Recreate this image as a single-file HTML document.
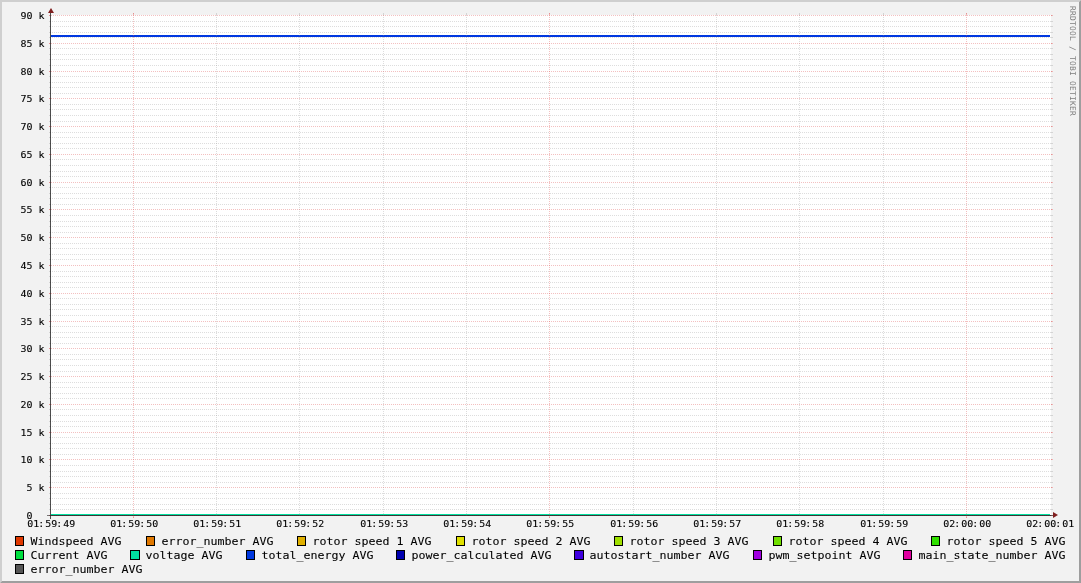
<!DOCTYPE html>
<html lang="en"><head><meta charset="utf-8"><title>RRDTOOL graph</title>
<style>
html,body{margin:0;padding:0;background:#f2f2f2;overflow:hidden}
svg{display:block;position:absolute;left:0;top:0;will-change:transform}
text{font-family:"DejaVu Sans Mono","Liberation Mono",monospace;fill:#000;white-space:pre}
.ax{font-size:9.5px;stroke:#000;stroke-width:0.1px}
.lg{font-size:11.11px;stroke:#000;stroke-width:0.08px}
.wm{font-size:7.9px;letter-spacing:0.244px;fill:#000;fill-opacity:0.5}
.g line{shape-rendering:crispEdges;stroke-width:1}
.mn{stroke:rgba(143,143,143,0.30)}.mj{stroke:rgba(222,79,79,0.36)}
.d{stroke-dasharray:1 1}
</style></head><body>
<svg width="1081" height="583" viewBox="0 0 1081 583">
<rect x="0" y="0" width="1081" height="583" fill="#f2f2f2"/>
<polygon points="0,583 2,581 2,2 1079,2 1081,0 0,0" fill="#cfcfcf"/>
<polygon points="2,581 1079,581 1079,2 1081,0 1081,583 0,583" fill="#9e9e9e"/>
<rect x="51" y="15" width="1000" height="500" fill="#fff" shape-rendering="crispEdges"/>
<g shape-rendering="crispEdges">
<rect x="51" y="35" width="999" height="2" fill="#0038e0"/>
<rect x="51" y="515" width="1000" height="1" fill="#555555"/>
<rect x="51" y="514" width="999" height="1" fill="#00e0a0"/>
</g>
<g class="g">
<line class="mn" x1="49" y1="509.5" x2="51" y2="509.5"/>
<line class="mn" x1="1051" y1="509.5" x2="1053" y2="509.5"/>
<line class="mn d" x1="50" y1="509.5" x2="1052" y2="509.5"/>
<line class="mn" x1="49" y1="504.5" x2="51" y2="504.5"/>
<line class="mn" x1="1051" y1="504.5" x2="1053" y2="504.5"/>
<line class="mn d" x1="50" y1="504.5" x2="1052" y2="504.5"/>
<line class="mn" x1="49" y1="498.5" x2="51" y2="498.5"/>
<line class="mn" x1="1051" y1="498.5" x2="1053" y2="498.5"/>
<line class="mn d" x1="50" y1="498.5" x2="1052" y2="498.5"/>
<line class="mn" x1="49" y1="493.5" x2="51" y2="493.5"/>
<line class="mn" x1="1051" y1="493.5" x2="1053" y2="493.5"/>
<line class="mn d" x1="50" y1="493.5" x2="1052" y2="493.5"/>
<line class="mn" x1="49" y1="482.5" x2="51" y2="482.5"/>
<line class="mn" x1="1051" y1="482.5" x2="1053" y2="482.5"/>
<line class="mn d" x1="50" y1="482.5" x2="1052" y2="482.5"/>
<line class="mn" x1="49" y1="476.5" x2="51" y2="476.5"/>
<line class="mn" x1="1051" y1="476.5" x2="1053" y2="476.5"/>
<line class="mn d" x1="50" y1="476.5" x2="1052" y2="476.5"/>
<line class="mn" x1="49" y1="471.5" x2="51" y2="471.5"/>
<line class="mn" x1="1051" y1="471.5" x2="1053" y2="471.5"/>
<line class="mn d" x1="50" y1="471.5" x2="1052" y2="471.5"/>
<line class="mn" x1="49" y1="465.5" x2="51" y2="465.5"/>
<line class="mn" x1="1051" y1="465.5" x2="1053" y2="465.5"/>
<line class="mn d" x1="50" y1="465.5" x2="1052" y2="465.5"/>
<line class="mn" x1="49" y1="454.5" x2="51" y2="454.5"/>
<line class="mn" x1="1051" y1="454.5" x2="1053" y2="454.5"/>
<line class="mn d" x1="50" y1="454.5" x2="1052" y2="454.5"/>
<line class="mn" x1="49" y1="448.5" x2="51" y2="448.5"/>
<line class="mn" x1="1051" y1="448.5" x2="1053" y2="448.5"/>
<line class="mn d" x1="50" y1="448.5" x2="1052" y2="448.5"/>
<line class="mn" x1="49" y1="443.5" x2="51" y2="443.5"/>
<line class="mn" x1="1051" y1="443.5" x2="1053" y2="443.5"/>
<line class="mn d" x1="50" y1="443.5" x2="1052" y2="443.5"/>
<line class="mn" x1="49" y1="437.5" x2="51" y2="437.5"/>
<line class="mn" x1="1051" y1="437.5" x2="1053" y2="437.5"/>
<line class="mn d" x1="50" y1="437.5" x2="1052" y2="437.5"/>
<line class="mn" x1="49" y1="426.5" x2="51" y2="426.5"/>
<line class="mn" x1="1051" y1="426.5" x2="1053" y2="426.5"/>
<line class="mn d" x1="50" y1="426.5" x2="1052" y2="426.5"/>
<line class="mn" x1="49" y1="421.5" x2="51" y2="421.5"/>
<line class="mn" x1="1051" y1="421.5" x2="1053" y2="421.5"/>
<line class="mn d" x1="50" y1="421.5" x2="1052" y2="421.5"/>
<line class="mn" x1="49" y1="415.5" x2="51" y2="415.5"/>
<line class="mn" x1="1051" y1="415.5" x2="1053" y2="415.5"/>
<line class="mn d" x1="50" y1="415.5" x2="1052" y2="415.5"/>
<line class="mn" x1="49" y1="409.5" x2="51" y2="409.5"/>
<line class="mn" x1="1051" y1="409.5" x2="1053" y2="409.5"/>
<line class="mn d" x1="50" y1="409.5" x2="1052" y2="409.5"/>
<line class="mn" x1="49" y1="398.5" x2="51" y2="398.5"/>
<line class="mn" x1="1051" y1="398.5" x2="1053" y2="398.5"/>
<line class="mn d" x1="50" y1="398.5" x2="1052" y2="398.5"/>
<line class="mn" x1="49" y1="393.5" x2="51" y2="393.5"/>
<line class="mn" x1="1051" y1="393.5" x2="1053" y2="393.5"/>
<line class="mn d" x1="50" y1="393.5" x2="1052" y2="393.5"/>
<line class="mn" x1="49" y1="387.5" x2="51" y2="387.5"/>
<line class="mn" x1="1051" y1="387.5" x2="1053" y2="387.5"/>
<line class="mn d" x1="50" y1="387.5" x2="1052" y2="387.5"/>
<line class="mn" x1="49" y1="382.5" x2="51" y2="382.5"/>
<line class="mn" x1="1051" y1="382.5" x2="1053" y2="382.5"/>
<line class="mn d" x1="50" y1="382.5" x2="1052" y2="382.5"/>
<line class="mn" x1="49" y1="371.5" x2="51" y2="371.5"/>
<line class="mn" x1="1051" y1="371.5" x2="1053" y2="371.5"/>
<line class="mn d" x1="50" y1="371.5" x2="1052" y2="371.5"/>
<line class="mn" x1="49" y1="365.5" x2="51" y2="365.5"/>
<line class="mn" x1="1051" y1="365.5" x2="1053" y2="365.5"/>
<line class="mn d" x1="50" y1="365.5" x2="1052" y2="365.5"/>
<line class="mn" x1="49" y1="359.5" x2="51" y2="359.5"/>
<line class="mn" x1="1051" y1="359.5" x2="1053" y2="359.5"/>
<line class="mn d" x1="50" y1="359.5" x2="1052" y2="359.5"/>
<line class="mn" x1="49" y1="354.5" x2="51" y2="354.5"/>
<line class="mn" x1="1051" y1="354.5" x2="1053" y2="354.5"/>
<line class="mn d" x1="50" y1="354.5" x2="1052" y2="354.5"/>
<line class="mn" x1="49" y1="343.5" x2="51" y2="343.5"/>
<line class="mn" x1="1051" y1="343.5" x2="1053" y2="343.5"/>
<line class="mn d" x1="50" y1="343.5" x2="1052" y2="343.5"/>
<line class="mn" x1="49" y1="337.5" x2="51" y2="337.5"/>
<line class="mn" x1="1051" y1="337.5" x2="1053" y2="337.5"/>
<line class="mn d" x1="50" y1="337.5" x2="1052" y2="337.5"/>
<line class="mn" x1="49" y1="332.5" x2="51" y2="332.5"/>
<line class="mn" x1="1051" y1="332.5" x2="1053" y2="332.5"/>
<line class="mn d" x1="50" y1="332.5" x2="1052" y2="332.5"/>
<line class="mn" x1="49" y1="326.5" x2="51" y2="326.5"/>
<line class="mn" x1="1051" y1="326.5" x2="1053" y2="326.5"/>
<line class="mn d" x1="50" y1="326.5" x2="1052" y2="326.5"/>
<line class="mn" x1="49" y1="315.5" x2="51" y2="315.5"/>
<line class="mn" x1="1051" y1="315.5" x2="1053" y2="315.5"/>
<line class="mn d" x1="50" y1="315.5" x2="1052" y2="315.5"/>
<line class="mn" x1="49" y1="309.5" x2="51" y2="309.5"/>
<line class="mn" x1="1051" y1="309.5" x2="1053" y2="309.5"/>
<line class="mn d" x1="50" y1="309.5" x2="1052" y2="309.5"/>
<line class="mn" x1="49" y1="304.5" x2="51" y2="304.5"/>
<line class="mn" x1="1051" y1="304.5" x2="1053" y2="304.5"/>
<line class="mn d" x1="50" y1="304.5" x2="1052" y2="304.5"/>
<line class="mn" x1="49" y1="298.5" x2="51" y2="298.5"/>
<line class="mn" x1="1051" y1="298.5" x2="1053" y2="298.5"/>
<line class="mn d" x1="50" y1="298.5" x2="1052" y2="298.5"/>
<line class="mn" x1="49" y1="287.5" x2="51" y2="287.5"/>
<line class="mn" x1="1051" y1="287.5" x2="1053" y2="287.5"/>
<line class="mn d" x1="50" y1="287.5" x2="1052" y2="287.5"/>
<line class="mn" x1="49" y1="282.5" x2="51" y2="282.5"/>
<line class="mn" x1="1051" y1="282.5" x2="1053" y2="282.5"/>
<line class="mn d" x1="50" y1="282.5" x2="1052" y2="282.5"/>
<line class="mn" x1="49" y1="276.5" x2="51" y2="276.5"/>
<line class="mn" x1="1051" y1="276.5" x2="1053" y2="276.5"/>
<line class="mn d" x1="50" y1="276.5" x2="1052" y2="276.5"/>
<line class="mn" x1="49" y1="271.5" x2="51" y2="271.5"/>
<line class="mn" x1="1051" y1="271.5" x2="1053" y2="271.5"/>
<line class="mn d" x1="50" y1="271.5" x2="1052" y2="271.5"/>
<line class="mn" x1="49" y1="259.5" x2="51" y2="259.5"/>
<line class="mn" x1="1051" y1="259.5" x2="1053" y2="259.5"/>
<line class="mn d" x1="50" y1="259.5" x2="1052" y2="259.5"/>
<line class="mn" x1="49" y1="254.5" x2="51" y2="254.5"/>
<line class="mn" x1="1051" y1="254.5" x2="1053" y2="254.5"/>
<line class="mn d" x1="50" y1="254.5" x2="1052" y2="254.5"/>
<line class="mn" x1="49" y1="248.5" x2="51" y2="248.5"/>
<line class="mn" x1="1051" y1="248.5" x2="1053" y2="248.5"/>
<line class="mn d" x1="50" y1="248.5" x2="1052" y2="248.5"/>
<line class="mn" x1="49" y1="243.5" x2="51" y2="243.5"/>
<line class="mn" x1="1051" y1="243.5" x2="1053" y2="243.5"/>
<line class="mn d" x1="50" y1="243.5" x2="1052" y2="243.5"/>
<line class="mn" x1="49" y1="232.5" x2="51" y2="232.5"/>
<line class="mn" x1="1051" y1="232.5" x2="1053" y2="232.5"/>
<line class="mn d" x1="50" y1="232.5" x2="1052" y2="232.5"/>
<line class="mn" x1="49" y1="226.5" x2="51" y2="226.5"/>
<line class="mn" x1="1051" y1="226.5" x2="1053" y2="226.5"/>
<line class="mn d" x1="50" y1="226.5" x2="1052" y2="226.5"/>
<line class="mn" x1="49" y1="221.5" x2="51" y2="221.5"/>
<line class="mn" x1="1051" y1="221.5" x2="1053" y2="221.5"/>
<line class="mn d" x1="50" y1="221.5" x2="1052" y2="221.5"/>
<line class="mn" x1="49" y1="215.5" x2="51" y2="215.5"/>
<line class="mn" x1="1051" y1="215.5" x2="1053" y2="215.5"/>
<line class="mn d" x1="50" y1="215.5" x2="1052" y2="215.5"/>
<line class="mn" x1="49" y1="204.5" x2="51" y2="204.5"/>
<line class="mn" x1="1051" y1="204.5" x2="1053" y2="204.5"/>
<line class="mn d" x1="50" y1="204.5" x2="1052" y2="204.5"/>
<line class="mn" x1="49" y1="198.5" x2="51" y2="198.5"/>
<line class="mn" x1="1051" y1="198.5" x2="1053" y2="198.5"/>
<line class="mn d" x1="50" y1="198.5" x2="1052" y2="198.5"/>
<line class="mn" x1="49" y1="193.5" x2="51" y2="193.5"/>
<line class="mn" x1="1051" y1="193.5" x2="1053" y2="193.5"/>
<line class="mn d" x1="50" y1="193.5" x2="1052" y2="193.5"/>
<line class="mn" x1="49" y1="187.5" x2="51" y2="187.5"/>
<line class="mn" x1="1051" y1="187.5" x2="1053" y2="187.5"/>
<line class="mn d" x1="50" y1="187.5" x2="1052" y2="187.5"/>
<line class="mn" x1="49" y1="176.5" x2="51" y2="176.5"/>
<line class="mn" x1="1051" y1="176.5" x2="1053" y2="176.5"/>
<line class="mn d" x1="50" y1="176.5" x2="1052" y2="176.5"/>
<line class="mn" x1="49" y1="171.5" x2="51" y2="171.5"/>
<line class="mn" x1="1051" y1="171.5" x2="1053" y2="171.5"/>
<line class="mn d" x1="50" y1="171.5" x2="1052" y2="171.5"/>
<line class="mn" x1="49" y1="165.5" x2="51" y2="165.5"/>
<line class="mn" x1="1051" y1="165.5" x2="1053" y2="165.5"/>
<line class="mn d" x1="50" y1="165.5" x2="1052" y2="165.5"/>
<line class="mn" x1="49" y1="159.5" x2="51" y2="159.5"/>
<line class="mn" x1="1051" y1="159.5" x2="1053" y2="159.5"/>
<line class="mn d" x1="50" y1="159.5" x2="1052" y2="159.5"/>
<line class="mn" x1="49" y1="148.5" x2="51" y2="148.5"/>
<line class="mn" x1="1051" y1="148.5" x2="1053" y2="148.5"/>
<line class="mn d" x1="50" y1="148.5" x2="1052" y2="148.5"/>
<line class="mn" x1="49" y1="143.5" x2="51" y2="143.5"/>
<line class="mn" x1="1051" y1="143.5" x2="1053" y2="143.5"/>
<line class="mn d" x1="50" y1="143.5" x2="1052" y2="143.5"/>
<line class="mn" x1="49" y1="137.5" x2="51" y2="137.5"/>
<line class="mn" x1="1051" y1="137.5" x2="1053" y2="137.5"/>
<line class="mn d" x1="50" y1="137.5" x2="1052" y2="137.5"/>
<line class="mn" x1="49" y1="132.5" x2="51" y2="132.5"/>
<line class="mn" x1="1051" y1="132.5" x2="1053" y2="132.5"/>
<line class="mn d" x1="50" y1="132.5" x2="1052" y2="132.5"/>
<line class="mn" x1="49" y1="121.5" x2="51" y2="121.5"/>
<line class="mn" x1="1051" y1="121.5" x2="1053" y2="121.5"/>
<line class="mn d" x1="50" y1="121.5" x2="1052" y2="121.5"/>
<line class="mn" x1="49" y1="115.5" x2="51" y2="115.5"/>
<line class="mn" x1="1051" y1="115.5" x2="1053" y2="115.5"/>
<line class="mn d" x1="50" y1="115.5" x2="1052" y2="115.5"/>
<line class="mn" x1="49" y1="109.5" x2="51" y2="109.5"/>
<line class="mn" x1="1051" y1="109.5" x2="1053" y2="109.5"/>
<line class="mn d" x1="50" y1="109.5" x2="1052" y2="109.5"/>
<line class="mn" x1="49" y1="104.5" x2="51" y2="104.5"/>
<line class="mn" x1="1051" y1="104.5" x2="1053" y2="104.5"/>
<line class="mn d" x1="50" y1="104.5" x2="1052" y2="104.5"/>
<line class="mn" x1="49" y1="93.5" x2="51" y2="93.5"/>
<line class="mn" x1="1051" y1="93.5" x2="1053" y2="93.5"/>
<line class="mn d" x1="50" y1="93.5" x2="1052" y2="93.5"/>
<line class="mn" x1="49" y1="87.5" x2="51" y2="87.5"/>
<line class="mn" x1="1051" y1="87.5" x2="1053" y2="87.5"/>
<line class="mn d" x1="50" y1="87.5" x2="1052" y2="87.5"/>
<line class="mn" x1="49" y1="82.5" x2="51" y2="82.5"/>
<line class="mn" x1="1051" y1="82.5" x2="1053" y2="82.5"/>
<line class="mn d" x1="50" y1="82.5" x2="1052" y2="82.5"/>
<line class="mn" x1="49" y1="76.5" x2="51" y2="76.5"/>
<line class="mn" x1="1051" y1="76.5" x2="1053" y2="76.5"/>
<line class="mn d" x1="50" y1="76.5" x2="1052" y2="76.5"/>
<line class="mn" x1="49" y1="65.5" x2="51" y2="65.5"/>
<line class="mn" x1="1051" y1="65.5" x2="1053" y2="65.5"/>
<line class="mn d" x1="50" y1="65.5" x2="1052" y2="65.5"/>
<line class="mn" x1="49" y1="59.5" x2="51" y2="59.5"/>
<line class="mn" x1="1051" y1="59.5" x2="1053" y2="59.5"/>
<line class="mn d" x1="50" y1="59.5" x2="1052" y2="59.5"/>
<line class="mn" x1="49" y1="54.5" x2="51" y2="54.5"/>
<line class="mn" x1="1051" y1="54.5" x2="1053" y2="54.5"/>
<line class="mn d" x1="50" y1="54.5" x2="1052" y2="54.5"/>
<line class="mn" x1="49" y1="48.5" x2="51" y2="48.5"/>
<line class="mn" x1="1051" y1="48.5" x2="1053" y2="48.5"/>
<line class="mn d" x1="50" y1="48.5" x2="1052" y2="48.5"/>
<line class="mn" x1="49" y1="37.5" x2="51" y2="37.5"/>
<line class="mn" x1="1051" y1="37.5" x2="1053" y2="37.5"/>
<line class="mn d" x1="50" y1="37.5" x2="1052" y2="37.5"/>
<line class="mn" x1="49" y1="32.5" x2="51" y2="32.5"/>
<line class="mn" x1="1051" y1="32.5" x2="1053" y2="32.5"/>
<line class="mn d" x1="50" y1="32.5" x2="1052" y2="32.5"/>
<line class="mn" x1="49" y1="26.5" x2="51" y2="26.5"/>
<line class="mn" x1="1051" y1="26.5" x2="1053" y2="26.5"/>
<line class="mn d" x1="50" y1="26.5" x2="1052" y2="26.5"/>
<line class="mn" x1="49" y1="21.5" x2="51" y2="21.5"/>
<line class="mn" x1="1051" y1="21.5" x2="1053" y2="21.5"/>
<line class="mn d" x1="50" y1="21.5" x2="1052" y2="21.5"/>
<line class="mn" x1="216.5" y1="13" x2="216.5" y2="15"/>
<line class="mn" x1="216.5" y1="515" x2="216.5" y2="516"/>
<line class="mn d" x1="216.5" y1="516" x2="216.5" y2="14"/>
<line class="mn" x1="299.5" y1="13" x2="299.5" y2="15"/>
<line class="mn" x1="299.5" y1="515" x2="299.5" y2="516"/>
<line class="mn d" x1="299.5" y1="516" x2="299.5" y2="14"/>
<line class="mn" x1="383.5" y1="13" x2="383.5" y2="15"/>
<line class="mn" x1="383.5" y1="515" x2="383.5" y2="516"/>
<line class="mn d" x1="383.5" y1="516" x2="383.5" y2="14"/>
<line class="mn" x1="466.5" y1="13" x2="466.5" y2="15"/>
<line class="mn" x1="466.5" y1="515" x2="466.5" y2="516"/>
<line class="mn d" x1="466.5" y1="516" x2="466.5" y2="14"/>
<line class="mn" x1="633.5" y1="13" x2="633.5" y2="15"/>
<line class="mn" x1="633.5" y1="515" x2="633.5" y2="516"/>
<line class="mn d" x1="633.5" y1="516" x2="633.5" y2="14"/>
<line class="mn" x1="716.5" y1="13" x2="716.5" y2="15"/>
<line class="mn" x1="716.5" y1="515" x2="716.5" y2="516"/>
<line class="mn d" x1="716.5" y1="516" x2="716.5" y2="14"/>
<line class="mn" x1="799.5" y1="13" x2="799.5" y2="15"/>
<line class="mn" x1="799.5" y1="515" x2="799.5" y2="516"/>
<line class="mn d" x1="799.5" y1="516" x2="799.5" y2="14"/>
<line class="mn" x1="883.5" y1="13" x2="883.5" y2="15"/>
<line class="mn" x1="883.5" y1="515" x2="883.5" y2="516"/>
<line class="mn d" x1="883.5" y1="516" x2="883.5" y2="14"/>
<line class="mj" x1="49" y1="515.5" x2="51" y2="515.5"/>
<line class="mj" x1="1051" y1="515.5" x2="1053" y2="515.5"/>
<line class="mj d" x1="49" y1="515.5" x2="1053" y2="515.5"/>
<line class="mj" x1="49" y1="487.5" x2="51" y2="487.5"/>
<line class="mj" x1="1051" y1="487.5" x2="1053" y2="487.5"/>
<line class="mj d" x1="49" y1="487.5" x2="1053" y2="487.5"/>
<line class="mj" x1="49" y1="459.5" x2="51" y2="459.5"/>
<line class="mj" x1="1051" y1="459.5" x2="1053" y2="459.5"/>
<line class="mj d" x1="49" y1="459.5" x2="1053" y2="459.5"/>
<line class="mj" x1="49" y1="432.5" x2="51" y2="432.5"/>
<line class="mj" x1="1051" y1="432.5" x2="1053" y2="432.5"/>
<line class="mj d" x1="49" y1="432.5" x2="1053" y2="432.5"/>
<line class="mj" x1="49" y1="404.5" x2="51" y2="404.5"/>
<line class="mj" x1="1051" y1="404.5" x2="1053" y2="404.5"/>
<line class="mj d" x1="49" y1="404.5" x2="1053" y2="404.5"/>
<line class="mj" x1="49" y1="376.5" x2="51" y2="376.5"/>
<line class="mj" x1="1051" y1="376.5" x2="1053" y2="376.5"/>
<line class="mj d" x1="49" y1="376.5" x2="1053" y2="376.5"/>
<line class="mj" x1="49" y1="348.5" x2="51" y2="348.5"/>
<line class="mj" x1="1051" y1="348.5" x2="1053" y2="348.5"/>
<line class="mj d" x1="49" y1="348.5" x2="1053" y2="348.5"/>
<line class="mj" x1="49" y1="321.5" x2="51" y2="321.5"/>
<line class="mj" x1="1051" y1="321.5" x2="1053" y2="321.5"/>
<line class="mj d" x1="49" y1="321.5" x2="1053" y2="321.5"/>
<line class="mj" x1="49" y1="293.5" x2="51" y2="293.5"/>
<line class="mj" x1="1051" y1="293.5" x2="1053" y2="293.5"/>
<line class="mj d" x1="49" y1="293.5" x2="1053" y2="293.5"/>
<line class="mj" x1="49" y1="265.5" x2="51" y2="265.5"/>
<line class="mj" x1="1051" y1="265.5" x2="1053" y2="265.5"/>
<line class="mj d" x1="49" y1="265.5" x2="1053" y2="265.5"/>
<line class="mj" x1="49" y1="237.5" x2="51" y2="237.5"/>
<line class="mj" x1="1051" y1="237.5" x2="1053" y2="237.5"/>
<line class="mj d" x1="49" y1="237.5" x2="1053" y2="237.5"/>
<line class="mj" x1="49" y1="209.5" x2="51" y2="209.5"/>
<line class="mj" x1="1051" y1="209.5" x2="1053" y2="209.5"/>
<line class="mj d" x1="49" y1="209.5" x2="1053" y2="209.5"/>
<line class="mj" x1="49" y1="182.5" x2="51" y2="182.5"/>
<line class="mj" x1="1051" y1="182.5" x2="1053" y2="182.5"/>
<line class="mj d" x1="49" y1="182.5" x2="1053" y2="182.5"/>
<line class="mj" x1="49" y1="154.5" x2="51" y2="154.5"/>
<line class="mj" x1="1051" y1="154.5" x2="1053" y2="154.5"/>
<line class="mj d" x1="49" y1="154.5" x2="1053" y2="154.5"/>
<line class="mj" x1="49" y1="126.5" x2="51" y2="126.5"/>
<line class="mj" x1="1051" y1="126.5" x2="1053" y2="126.5"/>
<line class="mj d" x1="49" y1="126.5" x2="1053" y2="126.5"/>
<line class="mj" x1="49" y1="98.5" x2="51" y2="98.5"/>
<line class="mj" x1="1051" y1="98.5" x2="1053" y2="98.5"/>
<line class="mj d" x1="49" y1="98.5" x2="1053" y2="98.5"/>
<line class="mj" x1="49" y1="71.5" x2="51" y2="71.5"/>
<line class="mj" x1="1051" y1="71.5" x2="1053" y2="71.5"/>
<line class="mj d" x1="49" y1="71.5" x2="1053" y2="71.5"/>
<line class="mj" x1="49" y1="43.5" x2="51" y2="43.5"/>
<line class="mj" x1="1051" y1="43.5" x2="1053" y2="43.5"/>
<line class="mj d" x1="49" y1="43.5" x2="1053" y2="43.5"/>
<line class="mj" x1="49" y1="15.5" x2="51" y2="15.5"/>
<line class="mj" x1="1051" y1="15.5" x2="1053" y2="15.5"/>
<line class="mj d" x1="49" y1="15.5" x2="1053" y2="15.5"/>
<line class="mj" x1="133.5" y1="13" x2="133.5" y2="15"/>
<line class="mj" x1="133.5" y1="515" x2="133.5" y2="518"/>
<line class="mj d" x1="133.5" y1="518" x2="133.5" y2="13"/>
<line class="mj" x1="549.5" y1="13" x2="549.5" y2="15"/>
<line class="mj" x1="549.5" y1="515" x2="549.5" y2="518"/>
<line class="mj d" x1="549.5" y1="518" x2="549.5" y2="13"/>
<line class="mj" x1="966.5" y1="13" x2="966.5" y2="15"/>
<line class="mj" x1="966.5" y1="515" x2="966.5" y2="518"/>
<line class="mj d" x1="966.5" y1="518" x2="966.5" y2="13"/>
</g>
<g shape-rendering="crispEdges">
<rect x="47" y="515" width="1008" height="1" fill="#1f1f1f" fill-opacity="0.6"/>
<rect x="50" y="11" width="1" height="508" fill="#1f1f1f" fill-opacity="0.78"/>
</g>
<polygon points="1053,512 1053,518 1058,515" fill="#801f1f"/>
<polygon points="48,13 54,13 51,8" fill="#801f1f"/>
<text class="ax" x="26.5" y="519" textLength="6" lengthAdjust="spacingAndGlyphs">0</text>
<text class="ax" x="26.5" y="491" textLength="18" lengthAdjust="spacingAndGlyphs">5 k</text>
<text class="ax" x="20.5" y="463" textLength="24" lengthAdjust="spacingAndGlyphs">10 k</text>
<text class="ax" x="20.5" y="436" textLength="24" lengthAdjust="spacingAndGlyphs">15 k</text>
<text class="ax" x="20.5" y="408" textLength="24" lengthAdjust="spacingAndGlyphs">20 k</text>
<text class="ax" x="20.5" y="380" textLength="24" lengthAdjust="spacingAndGlyphs">25 k</text>
<text class="ax" x="20.5" y="352" textLength="24" lengthAdjust="spacingAndGlyphs">30 k</text>
<text class="ax" x="20.5" y="325" textLength="24" lengthAdjust="spacingAndGlyphs">35 k</text>
<text class="ax" x="20.5" y="297" textLength="24" lengthAdjust="spacingAndGlyphs">40 k</text>
<text class="ax" x="20.5" y="269" textLength="24" lengthAdjust="spacingAndGlyphs">45 k</text>
<text class="ax" x="20.5" y="241" textLength="24" lengthAdjust="spacingAndGlyphs">50 k</text>
<text class="ax" x="20.5" y="213" textLength="24" lengthAdjust="spacingAndGlyphs">55 k</text>
<text class="ax" x="20.5" y="186" textLength="24" lengthAdjust="spacingAndGlyphs">60 k</text>
<text class="ax" x="20.5" y="158" textLength="24" lengthAdjust="spacingAndGlyphs">65 k</text>
<text class="ax" x="20.5" y="130" textLength="24" lengthAdjust="spacingAndGlyphs">70 k</text>
<text class="ax" x="20.5" y="102" textLength="24" lengthAdjust="spacingAndGlyphs">75 k</text>
<text class="ax" x="20.5" y="75" textLength="24" lengthAdjust="spacingAndGlyphs">80 k</text>
<text class="ax" x="20.5" y="47" textLength="24" lengthAdjust="spacingAndGlyphs">85 k</text>
<text class="ax" x="20.5" y="19" textLength="24" lengthAdjust="spacingAndGlyphs">90 k</text>
<text class="ax" x="27.3" y="527" dx="0 0 -1 1 0 -1 1 0" textLength="48" lengthAdjust="spacingAndGlyphs">01:59:49</text>
<text class="ax" x="110.3" y="527" dx="0 0 -1 1 0 -1 1 0" textLength="48" lengthAdjust="spacingAndGlyphs">01:59:50</text>
<text class="ax" x="193.3" y="527" dx="0 0 -1 1 0 -1 1 0" textLength="48" lengthAdjust="spacingAndGlyphs">01:59:51</text>
<text class="ax" x="276.3" y="527" dx="0 0 -1 1 0 -1 1 0" textLength="48" lengthAdjust="spacingAndGlyphs">01:59:52</text>
<text class="ax" x="360.3" y="527" dx="0 0 -1 1 0 -1 1 0" textLength="48" lengthAdjust="spacingAndGlyphs">01:59:53</text>
<text class="ax" x="443.3" y="527" dx="0 0 -1 1 0 -1 1 0" textLength="48" lengthAdjust="spacingAndGlyphs">01:59:54</text>
<text class="ax" x="526.3" y="527" dx="0 0 -1 1 0 -1 1 0" textLength="48" lengthAdjust="spacingAndGlyphs">01:59:55</text>
<text class="ax" x="610.3" y="527" dx="0 0 -1 1 0 -1 1 0" textLength="48" lengthAdjust="spacingAndGlyphs">01:59:56</text>
<text class="ax" x="693.3" y="527" dx="0 0 -1 1 0 -1 1 0" textLength="48" lengthAdjust="spacingAndGlyphs">01:59:57</text>
<text class="ax" x="776.3" y="527" dx="0 0 -1 1 0 -1 1 0" textLength="48" lengthAdjust="spacingAndGlyphs">01:59:58</text>
<text class="ax" x="860.3" y="527" dx="0 0 -1 1 0 -1 1 0" textLength="48" lengthAdjust="spacingAndGlyphs">01:59:59</text>
<text class="ax" x="943.3" y="527" dx="0 0 -1 1 0 -1 1 0" textLength="48" lengthAdjust="spacingAndGlyphs">02:00:00</text>
<text class="ax" x="1026.3" y="527" dx="0 0 -1 1 0 -1 1 0" textLength="48" lengthAdjust="spacingAndGlyphs">02:00:01</text>
<rect x="15.5" y="536.5" width="8" height="9" fill="#e03800" stroke="#000" stroke-width="1" shape-rendering="crispEdges"/>
<text class="lg" x="30.4" y="545" textLength="91" lengthAdjust="spacingAndGlyphs">Windspeed AVG</text>
<rect x="146.5" y="536.5" width="8" height="9" fill="#e07800" stroke="#000" stroke-width="1" shape-rendering="crispEdges"/>
<text class="lg" x="161.4" y="545" textLength="112" lengthAdjust="spacingAndGlyphs">error_number AVG</text>
<rect x="297.5" y="536.5" width="8" height="9" fill="#e0b000" stroke="#000" stroke-width="1" shape-rendering="crispEdges"/>
<text class="lg" x="312.4" y="545" textLength="119" lengthAdjust="spacingAndGlyphs">rotor speed 1 AVG</text>
<rect x="456.5" y="536.5" width="8" height="9" fill="#e0e000" stroke="#000" stroke-width="1" shape-rendering="crispEdges"/>
<text class="lg" x="471.4" y="545" textLength="119" lengthAdjust="spacingAndGlyphs">rotor speed 2 AVG</text>
<rect x="614.5" y="536.5" width="8" height="9" fill="#a0e000" stroke="#000" stroke-width="1" shape-rendering="crispEdges"/>
<text class="lg" x="629.4" y="545" textLength="119" lengthAdjust="spacingAndGlyphs">rotor speed 3 AVG</text>
<rect x="773.5" y="536.5" width="8" height="9" fill="#70e000" stroke="#000" stroke-width="1" shape-rendering="crispEdges"/>
<text class="lg" x="788.4" y="545" textLength="119" lengthAdjust="spacingAndGlyphs">rotor speed 4 AVG</text>
<rect x="931.5" y="536.5" width="8" height="9" fill="#30e000" stroke="#000" stroke-width="1" shape-rendering="crispEdges"/>
<text class="lg" x="946.4" y="545" textLength="119" lengthAdjust="spacingAndGlyphs">rotor speed 5 AVG</text>
<rect x="15.5" y="550.5" width="8" height="9" fill="#00e040" stroke="#000" stroke-width="1" shape-rendering="crispEdges"/>
<text class="lg" x="30.4" y="559" textLength="77" lengthAdjust="spacingAndGlyphs">Current AVG</text>
<rect x="130.5" y="550.5" width="9" height="9" fill="#00e0a0" stroke="#000" stroke-width="1" shape-rendering="crispEdges"/>
<text class="lg" x="145.4" y="559" textLength="77" lengthAdjust="spacingAndGlyphs">voltage AVG</text>
<rect x="246.5" y="550.5" width="8" height="9" fill="#0038e0" stroke="#000" stroke-width="1" shape-rendering="crispEdges"/>
<text class="lg" x="261.4" y="559" textLength="112" lengthAdjust="spacingAndGlyphs">total_energy AVG</text>
<rect x="396.5" y="550.5" width="8" height="9" fill="#0000b0" stroke="#000" stroke-width="1" shape-rendering="crispEdges"/>
<text class="lg" x="411.4" y="559" textLength="140" lengthAdjust="spacingAndGlyphs">power_calculated AVG</text>
<rect x="574.5" y="550.5" width="9" height="9" fill="#4000e0" stroke="#000" stroke-width="1" shape-rendering="crispEdges"/>
<text class="lg" x="589.4" y="559" textLength="140" lengthAdjust="spacingAndGlyphs">autostart_number AVG</text>
<rect x="753.5" y="550.5" width="8" height="9" fill="#a000e0" stroke="#000" stroke-width="1" shape-rendering="crispEdges"/>
<text class="lg" x="768.4" y="559" textLength="112" lengthAdjust="spacingAndGlyphs">pwm_setpoint AVG</text>
<rect x="903.5" y="550.5" width="8" height="9" fill="#e000a0" stroke="#000" stroke-width="1" shape-rendering="crispEdges"/>
<text class="lg" x="918.4" y="559" textLength="147" lengthAdjust="spacingAndGlyphs">main_state_number AVG</text>
<rect x="15.5" y="564.5" width="8" height="9" fill="#555555" stroke="#000" stroke-width="1" shape-rendering="crispEdges"/>
<text class="lg" x="30.4" y="573" textLength="112" lengthAdjust="spacingAndGlyphs">error_number AVG</text>
<text class="wm" transform="translate(1070,6) rotate(90)" x="0" y="0">RRDTOOL / TOBI OETIKER</text>
</svg>
</body></html>
